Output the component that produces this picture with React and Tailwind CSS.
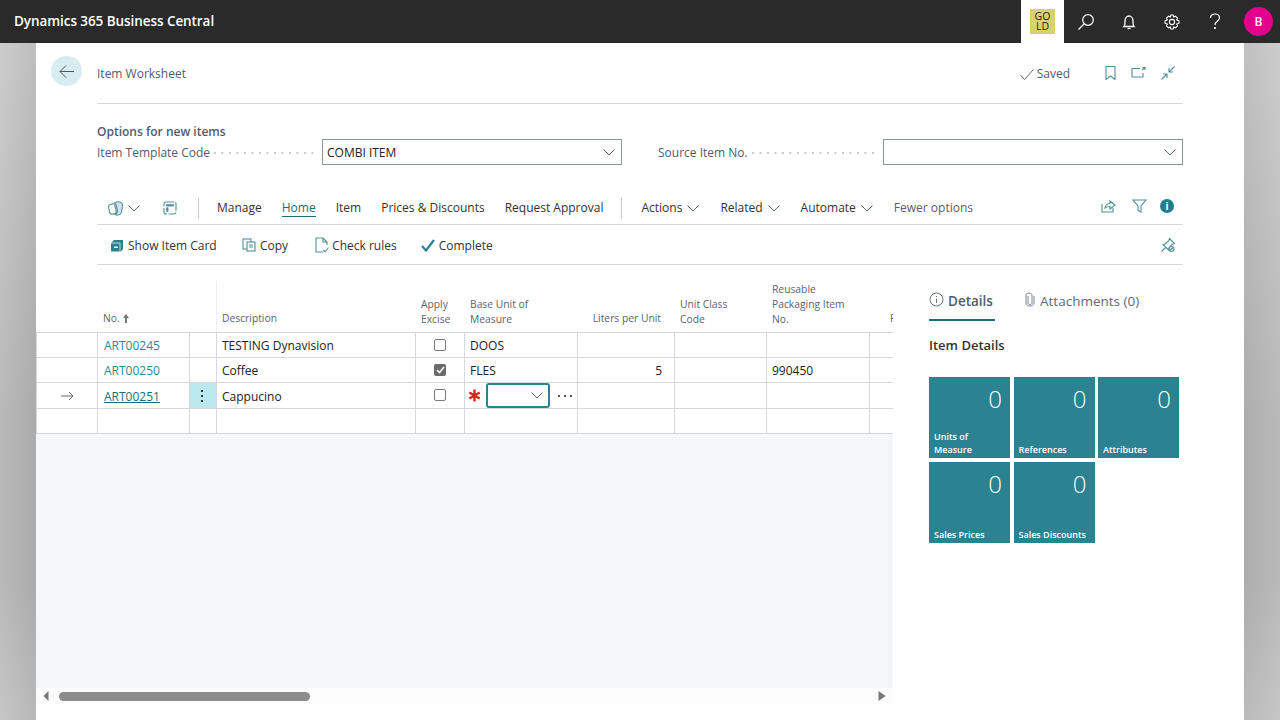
const TEAL = "#2b8290";

const Chev = ({ className = "" }) => (
  <svg width="12" height="7" viewBox="0 0 12 7" fill="none" stroke="#5f6b7a" strokeWidth="1" className={className}>
    <path d="M0.5 0.5 L6 6 L11.5 0.5" />
  </svg>
);

const Icon = ({ w = 16, h = 16, children, className = "", color = "#4f8f9a" }) => (
  <svg width={w} height={h} viewBox={`0 0 ${w} ${h}`} fill="none" stroke={color} strokeWidth="1.1" className={className}>
    {children}
  </svg>
);

const TopBar = () => (
  <div className="h-[43px] bg-[#2a2a2a] flex items-center shrink-0">
    <div className="ml-[14px] text-white font-semibold text-[13.5px] tracking-[-0.07px]">Dynamics 365 Business Central</div>
    <div className="ml-auto flex items-center h-full">
      <div className="w-[43px] h-full bg-white flex items-center justify-center">
        <div className="w-[25px] h-[25px] bg-[#d9d26c] text-[10.5px] leading-[10px] text-[#222] text-center pt-[2px]">GO<br />LD</div>
      </div>
      <div className="w-[43px] flex justify-center">
        <svg width="18" height="18" viewBox="0 0 18 18" fill="none" stroke="#fff" strokeWidth="1.2">
          <circle cx="11" cy="7" r="5.3" />
          <path d="M7 11 L1.5 16.5" />
        </svg>
      </div>
      <div className="w-[43px] flex justify-center">
        <svg width="16" height="16" viewBox="0 0 16 16" fill="none" stroke="#fff" strokeWidth="1.3">
          <path d="M3 12.5 C4 11.5 4 10 4 7 C4 4 6 2 8 2 C10 2 12 4 12 7 C12 10 12 11.5 13 12.5 Z" />
          <path d="M6.5 14.5 H9.5" />
        </svg>
      </div>
      <div className="w-[43px] flex justify-center">
        <svg width="16" height="16" viewBox="0 0 16 16" fill="none" stroke="#fff" strokeWidth="1.1">
          <circle cx="8" cy="8" r="2.6" />
          <path d="M6.8 1 H9.2 L9.7 3 L11.5 2.2 L13.5 4.2 L12.7 6 L15 6.8 V9.2 L12.7 10 L13.5 11.8 L11.5 13.8 L9.7 13 L9.2 15 H6.8 L6.3 13 L4.5 13.8 L2.5 11.8 L3.3 10 L1 9.2 V6.8 L3.3 6 L2.5 4.2 L4.5 2.2 L6.3 3 Z" />
        </svg>
      </div>
      <div className="w-[43px] flex justify-center">
        <svg width="12" height="17" viewBox="0 0 12 17" fill="none" stroke="#fff" strokeWidth="1.2">
          <path d="M1.5 5 C1.5 2.5 3.5 1 6 1 C8.5 1 10.5 2.5 10.5 5 C10.5 8 6 8 6 12" />
          <circle cx="6" cy="15" r="0.5" fill="#fff" />
        </svg>
      </div>
      <div className="w-[44px] flex pl-[8px]">
        <div className="w-[29px] h-[29px] rounded-full bg-[#e3008c] text-white text-[12px] font-semibold flex items-center justify-center">B</div>
      </div>
    </div>
  </div>
);

const Leader = ({ w }) => (
  <div className="h-[2px] mt-[2px] bg-[linear-gradient(to_right,#c4c8ce_1.5px,transparent_1.5px)] bg-[length:7.5px_2px]" style={{ width: w }} />
);

const Field = ({ label, value, lw, dots, ml = "" }) => (
  <div className={`flex items-center ${ml}`}>
    <div className="text-[12px] text-[#505c6e] whitespace-nowrap pt-[1px]" style={{ width: lw }}>{label}</div>
    <Leader w={dots} />
    <div className="ml-[6px] w-[300px] h-[26px] border border-[#8a94a0] flex items-center pl-[4px] pr-[6px] text-[12px] text-[#222]">
      <span className="pt-[1px]">{value}</span>
      <Chev className="ml-auto" />
    </div>
  </div>
);

const Tab = ({ children, active, chev, muted }) => (
  <div className={`flex items-center gap-[5px] text-[12px] whitespace-nowrap ${muted ? "text-[#55606e]" : active ? "text-[#1d6e78]" : "text-[#333]"}`}>
    <span className={active ? "border-b border-[#1d6e78] leading-[16px]" : "leading-[16px]"}>{children}</span>
    {chev && <Chev />}
  </div>
);

const ActionBar = () => (
  <div className="h-[40px] mt-[20px] border-b border-[#d5d8de] flex items-center pt-[7px]">
    <div className="ml-[11px] flex items-center gap-[3px]">
      <Icon w={17} h={15}>
        <rect x="1" y="3" width="8" height="10" rx="3" transform="rotate(-12 5 8)" />
        <path d="M7 1.5 C11 0 15 1 14.5 5 L13.5 11 C13 14 9 14.5 7 13.5 C9 11 8 8 7 6 Z" fill="#4f8f9a" fillOpacity="0.25" />
      </Icon>
      <Chev />
    </div>
    <div className="ml-[23px]">
      <Icon w={14} h={14}>
        <rect x="1" y="1" width="12" height="12" rx="2" strokeDasharray="8 1.5" />
        <rect x="3.2" y="3.2" width="7.6" height="2.2" fill="#4f8f9a" stroke="none" />
        <rect x="3.2" y="6.4" width="2.2" height="4.4" fill="#4f8f9a" stroke="none" />
      </Icon>
    </div>
    <div className="w-px h-[21px] bg-[#c8ccd2] ml-[21px]" />
    <div className="ml-[18px] flex items-center gap-[20px]">
      <Tab>Manage</Tab>
      <Tab active>Home</Tab>
      <Tab>Item</Tab>
      <Tab>Prices &amp; Discounts</Tab>
      <Tab>Request Approval</Tab>
    </div>
    <div className="w-px h-[21px] bg-[#c8ccd2] ml-[18px]" />
    <div className="ml-[19px] flex items-center gap-[21px]">
      <Tab chev>Actions</Tab>
      <Tab chev>Related</Tab>
      <Tab chev>Automate</Tab>
      <Tab muted>Fewer options</Tab>
    </div>
    <div className="ml-auto mr-[9px] flex items-center gap-[13px] -mt-[5px]">
      <Icon w={15} h={14} className="mr-[3px]">
        <path d="M1 5 V13 H12 V9" />
        <path d="M4 9 C4 6 7 4.5 9 4.5 V2 L14 6 L9 10 V7.5 C7 7.5 5 8 4 9 Z" />
      </Icon>
      <Icon w={15} h={14}>
        <path d="M1 1 H14 L9 7 V13 L6 11.5 V7 Z" />
      </Icon>
      <div className="w-[14px] h-[14px] rounded-full bg-[#1f7f8c] text-white text-[10px] font-bold flex items-center justify-center leading-none">i</div>
    </div>
  </div>
);

const SubBar = () => (
  <div className="h-[40px] border-b border-[#d5d8de] flex items-center text-[12px] text-[#333] pt-[1px]">
    <div className="ml-[14px] flex items-center gap-[5px]">
      <svg width="12" height="13" viewBox="0 0 12 13" fill={TEAL}>
        <path d="M0 4 L3 1 H12 V10 L10 12.5 H0 Z" />
        <path d="M0 4 H9 V12.5" fill="none" stroke="#fff" strokeWidth="0.7" />
        <rect x="3" y="7.5" width="4" height="1.5" fill="#fff" />
      </svg>
      <span className="w-[90px] pt-[1px]">Show Item Card</span>
    </div>
    <div className="ml-[24px] flex items-center gap-[4px]">
      <Icon w={14} h={14}>
        <rect x="1" y="1" width="8" height="10" />
        <rect x="5" y="4" width="8" height="9" fill="#fff" />
        <path d="M7 7 H11 M7 9 H11" />
      </Icon>
      <span className="pt-[1px]">Copy</span>
    </div>
    <div className="ml-[27px] flex items-center gap-[3px]">
      <Icon w={14} h={16}>
        <path d="M1 1 H8 L12 5 V8 M1 1 V15 H8 M8 1 V5 H12" />
        <path d="M8 13 L10 15 L13.5 10.5" />
      </Icon>
      <span className="pt-[1px]">Check rules</span>
    </div>
    <div className="ml-[24px] flex items-center gap-[4px]">
      <svg width="14" height="13" viewBox="0 0 14 13" fill="none" stroke={TEAL} strokeWidth="2.2">
        <path d="M1 7 L5 11.5 L13 1" />
      </svg>
      <span className="pt-[1px]">Complete</span>
    </div>
    <div className="ml-auto mr-[7px]">
      <Icon w={16} h={16}>
        <path d="M9.5 1.5 L14.5 6.5 L12 7.5 L9 11 L8.5 13 L3 7.5 L5 7 L8.5 4 Z" />
        <path d="M5.5 10.5 L1.5 14.5" />
        <circle cx="11.5" cy="12" r="2.5" fill="#fff" />
        <path d="M10 13.5 L13 10.5" />
      </Icon>
    </div>
  </div>
);

const COLS = "grid-cols-[62px_92px_27px_199px_49px_113px_97px_92px_103px_23px]";

const HeadCell = ({ children, className = "", line, tall }) => (
  <div className={`flex items-end pl-[5px] text-[10.3px] leading-[15px] text-[#5a6474] ${tall ? "pb-[5px]" : "pb-[6px]"} ${line ? "border-r border-[#eceef1]" : ""} ${className}`}>
    <div>{children}</div>
  </div>
);

const Cell = ({ children, className = "" }) => (
  <div className={`border-r border-[#d5d8de] flex items-center text-[12px] text-[#222] min-w-0 ${className}`}>{children}</div>
);

const Check = ({ on }) => (
  <div className="w-full flex justify-center -mt-[1px]">
    {on ? (
      <div className="w-[12px] h-[12px] rounded-[2px] bg-[#6b6b6b] flex items-center justify-center">
        <svg width="9" height="8" viewBox="0 0 9 8" fill="none" stroke="#fff" strokeWidth="1.6"><path d="M1 4 L3.5 6.5 L8 1" /></svg>
      </div>
    ) : (
      <div className="w-[12px] h-[12px] rounded-[2px] border border-[#7a7a7a] bg-white" />
    )}
  </div>
);

const Row = ({ h, no, mark, menu, desc, check, unit, liters, pack, blank }) => (
  <div className={`grid ${COLS} border-b border-[#d5d8de] bg-white`} style={{ height: h }}>
    <Cell className="border-l pl-[24px]">
      {mark && (
        <svg width="13" height="10" viewBox="0 0 13 10" fill="none" stroke="#666" strokeWidth="1"><path d="M0 5 H12 M8 1 L12 5 L8 9" /></svg>
      )}
    </Cell>
    <Cell className={`pl-[6px] ${menu ? "pt-[2px]" : "pt-[1px]"}`}><span className="text-[#2b8a94]">{no}</span></Cell>
    <Cell className={menu ? "bg-[#b9e8ee] justify-center" : ""}>
      {menu && <div className="flex flex-col gap-[3px] -ml-[2px]"><i className="block w-[2px] h-[2px] bg-[#333]" /><i className="block w-[2px] h-[2px] bg-[#333]" /><i className="block w-[2px] h-[2px] bg-[#333]" /></div>}
    </Cell>
    <Cell className={`pl-[5px] ${menu ? "pt-[2px]" : "pt-[1px]"}`}>{desc}</Cell>
    <Cell>{!blank && <Check on={check} />}</Cell>
    <Cell className="pl-[5px] pt-[1px]">{unit}</Cell>
    <Cell className="justify-end pr-[12px] pt-[1px]">{liters}</Cell>
    <Cell />
    <Cell className="pl-[5px] pt-[1px]">{pack}</Cell>
    <div />
  </div>
);

const EditRow = () => (
  <Row
    h={26}
    no={<span className="underline text-[#1d6e78]">ART00251</span>}
    mark
    menu
    desc="Cappucino"
    unit={
      <div className="flex items-center -mt-[1px]">
        <svg width="13" height="13" viewBox="0 0 13 13" stroke="#d8261c" strokeWidth="2.4" className="-ml-[2px]"><path d="M6.5 0.5 V12.5 M1.3 3.5 L11.7 9.5 M11.7 3.5 L1.3 9.5" /></svg>
        <div className="w-[64px] h-[25px] border-2 border-[#2b8290] rounded-[3px] flex items-center justify-end pr-[5px] bg-white ml-[5px]">
          <Chev />
        </div>
        <div className="ml-[8px] flex gap-[4px]"><i className="block w-[2px] h-[2px] bg-[#555]" /><i className="block w-[2px] h-[2px] bg-[#555]" /><i className="block w-[2px] h-[2px] bg-[#555]" /></div>
      </div>
    }
  />
);

const Grid = () => (
  <div className="w-[857px] flex flex-col h-[439px] shrink-0">
    <div className={`grid ${COLS} h-[68px] shrink-0 border-b border-[#d5d8de] pt-[16px]`}>
      <div />
      <HeadCell className="col-span-2" line>
        <span className="inline-flex items-center gap-[3px]">No.<svg width="6" height="9" viewBox="0 0 6 9" fill="#777"><path d="M3 0 L6 4 H4 V9 H2 V4 H0 Z" /></svg></span>
      </HeadCell>
      <HeadCell>Description</HeadCell>
      <HeadCell tall>Apply<br />Excise</HeadCell>
      <HeadCell tall>Base Unit of<br />Measure</HeadCell>
      <HeadCell className="justify-end pr-[14px]">Liters per Unit</HeadCell>
      <HeadCell tall>Unit Class<br />Code</HeadCell>
      <HeadCell tall>Reusable<br />Packaging Item<br />No.</HeadCell>
      <div className="flex items-end pb-[6px] pl-[20px] text-[10.3px] leading-[15px] text-[#5a6474] overflow-hidden whitespace-nowrap">Price</div>
    </div>
    <Row h={25} no="ART00245" desc="TESTING Dynavision" unit="DOOS" />
    <Row h={25} no="ART00250" desc="Coffee" check unit="FLES" liters="5" pack="990450" />
    <EditRow />
    <Row h={25} blank />
    <div className="flex-1 bg-[#f5f6f8]" />
    <div className="h-[16px] bg-[#fcfcfc] flex items-center shrink-0 pl-[7px] pr-[7px]">
      <svg width="6" height="10" viewBox="0 0 6 10" fill="#777"><path d="M5.5 0 V10 L0.5 5 Z" /></svg>
      <div className="ml-[10px] w-[251px] h-[9px] rounded-full bg-[#8c8c8c]" />
      <svg width="8" height="10" viewBox="0 0 8 10" fill="#777" className="ml-auto"><path d="M0.5 0 V10 L7.5 5 Z" /></svg>
    </div>
  </div>
);

const Tile = ({ n, label }) => (
  <div className="w-[81px] h-[81px] bg-[#2b8290] text-white flex flex-col px-[5px] pb-[2px]">
    <div className="text-right text-[24px] leading-[26px] mt-[9px] pr-[3px] font-light">{n}</div>
    <div className="mt-auto text-[9px] font-semibold leading-[13px]">{label}</div>
  </div>
);

const Side = () => (
  <div className="flex-1 pl-[36px] pt-[16px]">
    <div className="flex h-[39px] text-[13.5px]">
      <div className="w-[66px] border-b-2 border-[#1d6e78] flex items-start pt-[10px] gap-[4px] font-semibold text-[#505c6e] h-[40px]">
        <svg width="15" height="15" viewBox="0 0 15 15" fill="none" stroke="#66707f" strokeWidth="1" className="mt-[1px] shrink-0">
          <circle cx="7.5" cy="7.5" r="6.5" />
          <path d="M7.5 6.5 V11 M7.5 4 V5" />
        </svg>
        Details
      </div>
      <div className="ml-[30px] flex items-start pt-[10px] gap-[5px] text-[#5f6a78]">
        <svg width="10" height="15" viewBox="0 0 10 15" fill="none" stroke="#7a8390" strokeWidth="1" className="mt-[1px]">
          <path d="M3 4 V11 C3 13 7 13 7 11 V3 C7 0.5 1 0.5 1 3 V11 C1 15 9 15 9 11 V4" />
        </svg>
        Attachments (0)
      </div>
    </div>
    <div className="mt-[16px] text-[13px] font-semibold text-[#333]">Item Details</div>
    <div className="mt-[21px] flex flex-wrap gap-x-[3.5px] gap-y-[4px] w-[251px]">
      <Tile n="0" label={<>Units of<br />Measure</>} />
      <Tile n="0" label="References" />
      <Tile n="0" label="Attributes" />
      <Tile n="0" label="Sales Prices" />
      <Tile n="0" label="Sales Discounts" />
    </div>
  </div>
);

export default function App() {
  return (
    <div className="w-[1280px] h-[720px] overflow-hidden flex flex-col bg-white font-['Open_Sans',sans-serif]">
      <TopBar />
      <div className="flex flex-1 min-h-0">
        <div className="w-[36px] shrink-0 bg-[linear-gradient(to_right,rgba(255,255,255,0.08),rgba(0,0,0,0.05)),linear-gradient(to_bottom,#c8c8c8,#b4b4b4_55%,#b4b4b4_80%,#c2c2c2)]" />
        <div className="flex-1 bg-white min-w-0">
          <div className="flex pl-[15px] pr-[61px]">
            <div className="mt-[13px] w-[31px] h-[30px] rounded-full bg-[#d8edf1] flex items-center justify-center shrink-0">
              <svg width="15" height="13" viewBox="0 0 15 13" fill="none" stroke="#555" strokeWidth="1"><path d="M15 6.5 H1 M7 0.5 L1 6.5 L7 12.5" /></svg>
            </div>
            <div className="ml-[15px] flex-1 h-[61px] border-b border-[#d5d8de] flex items-center pt-[2px]">
              <span className="text-[12px] text-[#505c6e]">Item Worksheet</span>
              <div className="ml-auto flex items-center">
                <svg width="14" height="11" viewBox="0 0 14 11" fill="none" stroke="#5f6b7a" strokeWidth="1"><path d="M0.5 6 L4.5 10.5 L13.5 0.5" /></svg>
                <span className="ml-[3px] text-[12px] text-[#505c6e]">Saved</span>
                <svg width="11" height="14" viewBox="0 0 11 14" fill="none" stroke="#4f8f9a" strokeWidth="1.1" className="ml-[35px] -mt-[3px]"><path d="M1 0.5 H10 V13.5 L5.5 10 L1 13.5 Z" /></svg>
                <svg width="15" height="11" viewBox="0 0 15 11" fill="none" stroke="#4f8f9a" strokeWidth="1.1" className="ml-[15px] -mt-[3px]"><path d="M9 1.5 H1 V10 H12 V6 M11 3 L14 0.5 M11.5 0.5 H14 V3" /></svg>
                <svg width="14" height="14" viewBox="0 0 14 14" fill="none" stroke="#4f8f9a" strokeWidth="1.1" className="ml-[15px] mr-[8px] -mt-[3px]"><path d="M13.5 0.5 L8 6 M8 2 V6 H12 M0.5 13.5 L6 8 M2 8 H6 V12" /></svg>
              </div>
            </div>
          </div>
          <div className="px-[61px]">
            <div className="mt-[20px] text-[12px] font-semibold text-[#505c6e] leading-[16px]">Options for new items</div>
            <div className="flex h-[26px] -mt-[1px]">
              <Field label="Item Template Code" value="COMBI ITEM" lw={117} dots={102} />
              <Field label="Source Item No." lw={94} dots={125} ml="ml-[36px]" />
            </div>
            <ActionBar />
            <SubBar />
          </div>
          <div className="flex">
            <Grid />
            <Side />
          </div>
        </div>
        <div className="w-[36px] shrink-0 bg-[linear-gradient(to_right,rgba(0,0,0,0.04),rgba(255,255,255,0.08)),linear-gradient(to_bottom,#c8c8c8,#b4b4b4_55%,#b4b4b4_80%,#c2c2c2)]" />
      </div>
    </div>
  );
}
